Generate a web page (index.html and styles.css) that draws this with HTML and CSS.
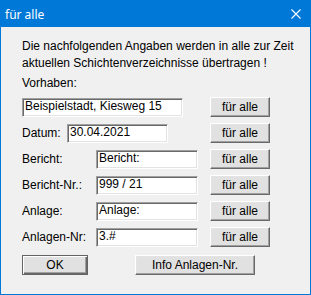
FILE: index.html
```html
<!DOCTYPE html>
<html lang="de">
<head>
    <meta charset="UTF-8">
    <title>für alle</title>
    <link rel="stylesheet" href="styles.css">
</head>
<body>
    <div class="fenster">
        <div class="titel">
            <span class="titelText">für alle</span>
            <svg class="schliessen" width="10" height="10" viewBox="0 0 10 10">
                <path d="M0.5 0.5 L9.5 9.5 M9.5 0.5 L0.5 9.5" stroke="#fff" stroke-width="1.1" fill="none"/>
            </svg>
        </div>

        <div class="inhalt">
            <p class="hinweis">Die nachfolgenden Angaben werden in alle zur Zeit<br>aktuellen Schichtenverzeichnisse übertragen !</p>
            <p class="vorhaben">Vorhaben:</p>

            <div class="zeile">
                <div class="feld"><div class="eingabe breit">Beispielstadt, Kiesweg 15</div></div>
                <button class="knopf">für alle</button>
            </div>
            <div class="zeile">
                <div class="feld"><span class="label kurz">Datum:</span><div class="eingabe mittel">30.04.2021</div></div>
                <button class="knopf">für alle</button>
            </div>
            <div class="zeile">
                <div class="feld"><span class="label">Bericht:</span><div class="eingabe">Bericht:</div></div>
                <button class="knopf">für alle</button>
            </div>
            <div class="zeile">
                <div class="feld"><span class="label">Bericht-Nr.:</span><div class="eingabe">999 / 21</div></div>
                <button class="knopf">für alle</button>
            </div>
            <div class="zeile">
                <div class="feld"><span class="label">Anlage:</span><div class="eingabe">Anlage:</div></div>
                <button class="knopf">für alle</button>
            </div>
            <div class="zeile">
                <div class="feld"><span class="label">Anlagen-Nr:</span><div class="eingabe">3.#</div></div>
                <button class="knopf">für alle</button>
            </div>

            <div class="unten">
                <button class="knopf ok">OK</button>
                <button class="knopf info">Info Anlagen-Nr.</button>
            </div>
        </div>
    </div>
</body>
</html>
```
FILE: styles.css
```css
html, body{
    margin: 0;
    padding: 0;
    background: #f0f0f0;
}

.fenster{
    width: 311px;
    height: 295px;
    box-sizing: border-box;
    border: 1px solid #0078d7;
    background: #f0f0f0;
    font-family: "Liberation Sans", Arial, sans-serif;
    font-size: 12px;
    color: #000;
}

.titel{
    height: 26px;
    background: #0078d7;
    display: flex;
    align-items: center;
    justify-content: space-between;
    padding: 0 9px 0 4px;
}

.titelText{
    font-family: "Noto Sans", sans-serif;
    font-size: 12px;
    color: #fff;
}

.inhalt{
    padding: 11px 0 0 21px;
}

.hinweis{
    margin: 0;
    line-height: 17px;
}

.vorhaben{
    margin: 3px 0 0 0;
    line-height: 16px;
}

.zeile{
    display: flex;
    align-items: center;
    height: 20px;
    margin-top: 6px;
}

.feld{
    width: 188px;
    display: flex;
    align-items: center;
}

.label{
    width: 74px;
    flex: none;
}

.label.kurz{
    width: 45px;
}

.eingabe{
    box-sizing: border-box;
    width: 102px;
    height: 19px;
    line-height: 15px;
    padding: 0 2px;
    background: #fff;
    border-top: 1px solid #a0a0a0;
    border-left: 1px solid #a0a0a0;
    border-right: 1px solid #fff;
    border-bottom: 1px solid #fff;
    box-shadow: inset 1px 1px 0 #696969, inset -1px -1px 0 #e3e3e3;
    white-space: nowrap;
}

.eingabe.breit{
    width: 161px;
}

.eingabe.mittel{
    width: 101px;
}

.knopf{
    box-sizing: border-box;
    width: 60px;
    height: 20px;
    padding: 0;
    font-family: "Liberation Sans", Arial, sans-serif;
    font-size: 12px;
    color: #000;
    background: #e1e1e1;
    border-top: 1px solid #fff;
    border-left: 1px solid #fff;
    border-right: 1px solid #696969;
    border-bottom: 1px solid #696969;
    box-shadow: inset -1px -1px 0 #a0a0a0, inset 1px 1px 0 #e3e3e3;
}

.unten{
    display: flex;
    margin-top: 8px;
}

.ok{
    width: 66px;
    border: 1px solid #646464;
    box-shadow: inset 1px 1px 0 #fff, inset -1px -1px 0 #696969, inset -2px -2px 0 #a0a0a0;
}

.info{
    width: 120px;
    margin-left: 47px;
}
```
